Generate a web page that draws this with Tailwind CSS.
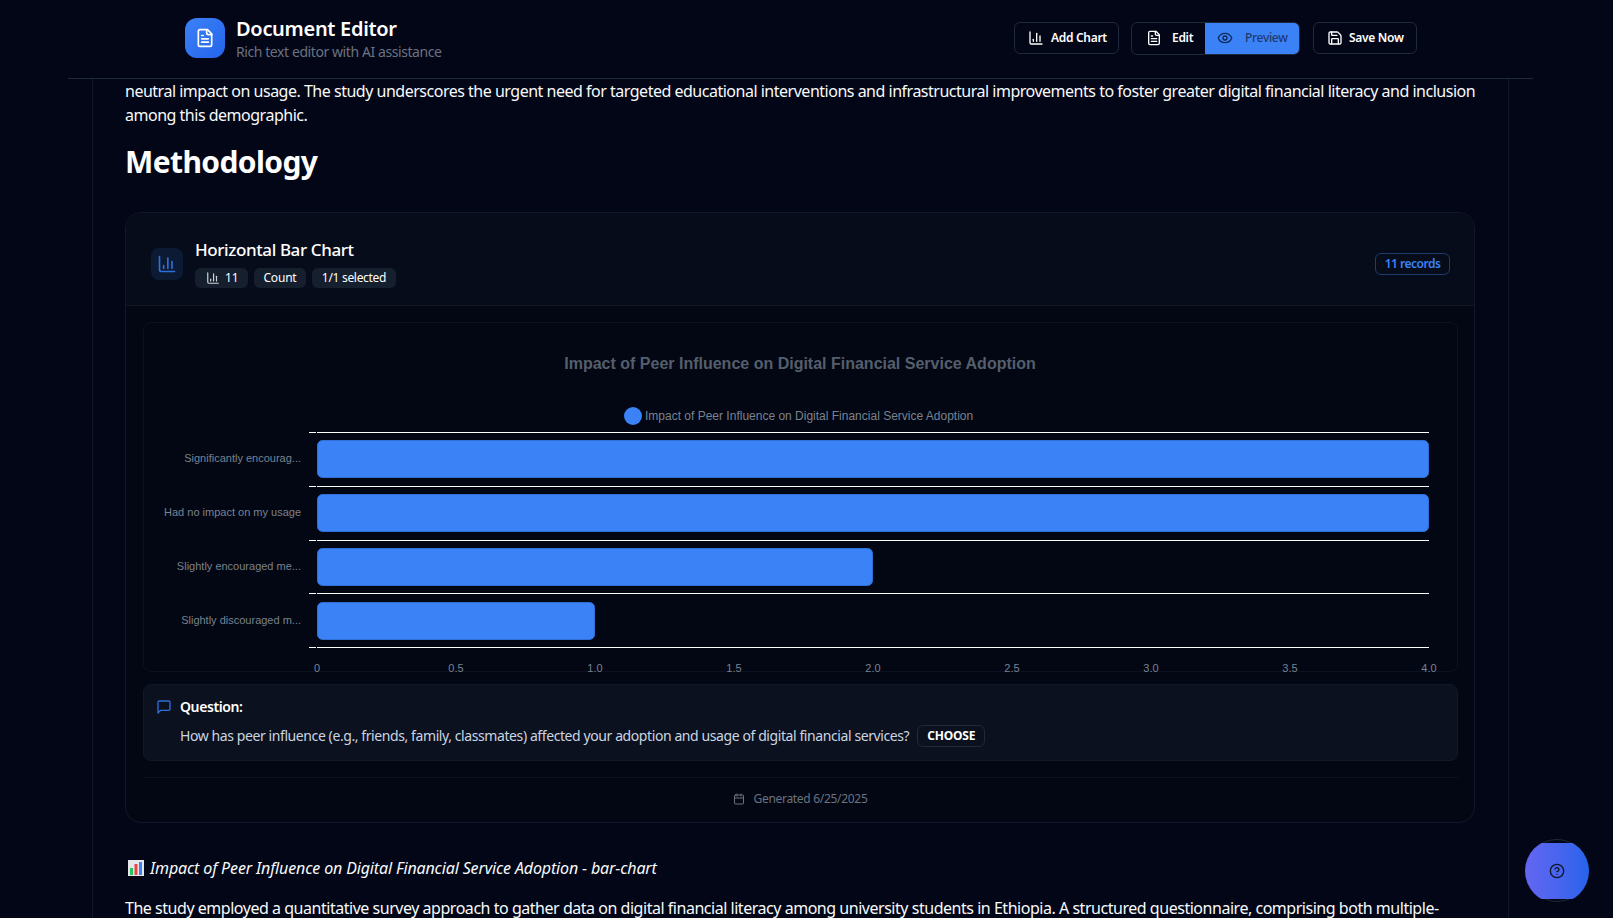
<!DOCTYPE html>
<html lang="en">
<head>
    <meta charset="UTF-8">
    <meta name="viewport" content="width=device-width, initial-scale=1.0">
    <title>Document Editor</title>
    <script src="https://cdn.jsdelivr.net/npm/@tailwindcss/browser@4"></script>
</head>
<body class="relative h-[918px] overflow-hidden bg-[#020617] text-white font-['Noto_Sans','Open_Sans',sans-serif]">

    <!-- top bar -->
    <header class="ml-[68px] flex h-[79px] w-[1465px] items-center justify-between border-b border-[#1e293b] pb-[2px] pl-[117px] pr-[116px]">
        <div class="flex items-center gap-[11px]">
            <div class="flex h-10 w-10 items-center justify-center rounded-xl bg-gradient-to-br from-[#3b82f6] to-[#2563eb]">
                <svg class="h-5 w-5" viewBox="0 0 24 24" fill="none" stroke="white" stroke-width="2" stroke-linecap="round" stroke-linejoin="round"><path d="M15 2H6a2 2 0 0 0-2 2v16a2 2 0 0 0 2 2h12a2 2 0 0 0 2-2V7Z"/><path d="M14 2v4a2 2 0 0 0 2 2h4"/><path d="M10 9H8"/><path d="M16 13H8"/><path d="M16 17H8"/></svg>
            </div>
            <div class="mt-[2px]">
                <h1 class="text-[20px] font-semibold leading-[24px] tracking-[-0.3px]">Document Editor</h1>
                <p class="mt-[1px] text-[14px] leading-[20px] tracking-[-0.42px] text-[#6b7280]">Rich text editor with AI assistance</p>
            </div>
        </div>
        <div class="flex items-center gap-3">
            <button class="flex h-8 w-[105px] items-center gap-[7px] rounded-md border border-[#1e293b] pl-[13px] text-[12px] font-semibold tracking-[-0.3px]">
                <svg class="h-4 w-4" viewBox="0 0 24 24" fill="none" stroke="white" stroke-width="2" stroke-linecap="round" stroke-linejoin="round"><path d="M3 3v16a2 2 0 0 0 2 2h16"/><path d="M8 17v-3"/><path d="M13 17V5"/><path d="M18 17V9"/></svg>
                Add Chart
            </button>
            <div class="flex h-[33px] w-[169px] overflow-hidden rounded-md border border-[#1e293b]">
                <button class="flex w-[73px] items-center gap-[10px] pl-[14px] text-[12px] font-semibold tracking-[-0.3px]">
                    <svg class="h-4 w-4" viewBox="0 0 24 24" fill="none" stroke="white" stroke-width="2" stroke-linecap="round" stroke-linejoin="round"><path d="M15 2H6a2 2 0 0 0-2 2v16a2 2 0 0 0 2 2h12a2 2 0 0 0 2-2V7Z"/><path d="M14 2v4a2 2 0 0 0 2 2h4"/><path d="M10 9H8"/><path d="M16 13H8"/><path d="M16 17H8"/></svg>
                    Edit
                </button>
                <button class="flex flex-1 items-center gap-[12px] bg-[#3b82f6] pl-3 text-[12px] font-medium tracking-[-0.3px] text-[#1e3a70]">
                    <svg class="h-4 w-4" viewBox="0 0 24 24" fill="none" stroke="#0f2a5c" stroke-width="2" stroke-linecap="round" stroke-linejoin="round"><path d="M2.06 12.35a1 1 0 0 1 0-.7 10.75 10.75 0 0 1 19.88 0 1 1 0 0 1 0 .7 10.75 10.75 0 0 1-19.88 0"/><circle cx="12" cy="12" r="3"/></svg>
                    Preview
                </button>
            </div>
            <button class="ml-[1px] flex h-8 w-[104px] items-center gap-[6px] rounded-md border border-[#1e293b] pl-[13px] text-[12px] font-semibold tracking-[-0.3px]">
                <svg class="h-4 w-4" viewBox="0 0 24 24" fill="none" stroke="white" stroke-width="2" stroke-linecap="round" stroke-linejoin="round"><path d="M15.2 3a2 2 0 0 1 1.4.6l3.8 3.8a2 2 0 0 1 .6 1.4V19a2 2 0 0 1-2 2H5a2 2 0 0 1-2-2V5a2 2 0 0 1 2-2z"/><path d="M17 21v-7a1 1 0 0 0-1-1H8a1 1 0 0 0-1 1v7"/><path d="M7 3v4a1 1 0 0 0 1 1h7"/></svg>
                Save Now
            </button>
        </div>
    </header>

    <!-- document -->
    <main class="ml-[92px] h-[839px] w-[1417px] border-x border-[#111827] px-[32px]">
        <p class="text-[16px] leading-[24px] tracking-[-0.49px] text-[#f8fafc]">neutral impact on usage. The study underscores the urgent need for targeted educational interventions and infrastructural improvements to foster greater digital financial literacy and inclusion among this demographic.</p>
        <h2 class="mt-[17px] text-[30px] font-bold leading-[36px] tracking-[-0.6px]">Methodology</h2>

        <section class="mt-[32px] h-[611px] w-[1350px] rounded-2xl border border-[#111827] bg-[#020713]">
            <div class="flex h-[93px] items-center justify-between rounded-t-2xl border-b border-[#111827] bg-[#070c1a] pl-[25px] pr-[24px] pt-[9px]">
                <div class="flex items-center gap-3">
                    <div class="flex h-8 w-8 items-center justify-center rounded-lg bg-[#0c1a33]">
                        <svg class="h-5 w-5" viewBox="0 0 24 24" fill="none" stroke="#2f6fd8" stroke-width="2" stroke-linecap="round" stroke-linejoin="round"><path d="M3 3v16a2 2 0 0 0 2 2h16"/><path d="M8 17v-3"/><path d="M13 17V5"/><path d="M18 17V9"/></svg>
                    </div>
                    <div>
                        <h3 class="text-[17px] font-medium leading-[22px] tracking-[-0.4px]">Horizontal Bar Chart</h3>
                        <div class="mt-[7px] flex gap-[6px] text-[12px] leading-[20px]">
                            <span class="flex h-5 w-[53px] items-center gap-[5px] rounded-md bg-[#161f2e] pl-[11px] tracking-[-0.2px]">
                                <svg class="h-[14px] w-[14px]" viewBox="0 0 24 24" fill="none" stroke="#d1d5db" stroke-width="2" stroke-linecap="round" stroke-linejoin="round"><path d="M3 3v16a2 2 0 0 0 2 2h16"/><path d="M8 17v-3"/><path d="M13 17V5"/><path d="M18 17V9"/></svg>
                                11
                            </span>
                            <span class="flex h-5 w-[52px] items-center justify-center rounded-md bg-[#161f2e] tracking-[-0.2px]">Count</span>
                            <span class="flex h-5 w-[84px] items-center justify-center rounded-md bg-[#161f2e] tracking-[-0.3px]">1/1 selected</span>
                        </div>
                    </div>
                </div>
                <span class="flex h-[22px] w-[75px] items-center justify-center rounded-md border border-[#1e3a6e] text-[12px] font-semibold tracking-[-0.5px] text-[#3b82f6]">11 records</span>
            </div>

            <div class="pl-[17px] pr-[16px] pt-[16px]">
                <div class="h-[350px] rounded-lg border border-[#0b1120]">
                    <!-- chart, origin is 144,323 on the page -->
                    <svg class="block overflow-visible font-['Liberation_Sans',Arial,sans-serif]" width="1313" height="348" viewBox="0 0 1313 348">
                        <text x="656" y="46" text-anchor="middle" font-size="16" font-weight="700" fill="#555e6c">Impact of Peer Influence on Digital Financial Service Adoption</text>
                        <circle cx="489" cy="93" r="9" fill="#3b82f6"/>
                        <text x="501" y="97" font-size="12" fill="#7a8290">Impact of Peer Influence on Digital Financial Service Adoption</text>
                        <g stroke="#ffffff" stroke-width="1">
                            <path d="M165 109.5h7M173 109.5h1112"/>
                            <path d="M165 163.5h7M173 163.5h1112"/>
                            <path d="M165 217.5h7M173 217.5h1112"/>
                            <path d="M165 270.5h7M173 270.5h1112"/>
                            <path d="M165 324.5h7M173 324.5h1112"/>
                        </g>
                        <g fill="#3b82f6" stroke="#2f6fd8">
                            <rect x="173.5" y="117.5" width="1111" height="37" rx="5"/>
                            <rect x="173.5" y="171.5" width="1111" height="37" rx="5"/>
                            <rect x="173.5" y="225.5" width="555" height="37" rx="5"/>
                            <rect x="173.5" y="279.5" width="277" height="37" rx="5"/>
                        </g>
                        <g font-size="11" fill="#7a8290" text-anchor="end">
                            <text x="157" y="139">Significantly encourag...</text>
                            <text x="157" y="193">Had no impact on my usage</text>
                            <text x="157" y="247">Slightly encouraged me...</text>
                            <text x="157" y="301">Slightly discouraged m...</text>
                        </g>
                        <g font-size="11" fill="#7a8290" text-anchor="middle">
                            <text x="173" y="349">0</text>
                            <text x="312" y="349">0.5</text>
                            <text x="451" y="349">1.0</text>
                            <text x="590" y="349">1.5</text>
                            <text x="729" y="349">2.0</text>
                            <text x="868" y="349">2.5</text>
                            <text x="1007" y="349">3.0</text>
                            <text x="1146" y="349">3.5</text>
                            <text x="1285" y="349">4.0</text>
                        </g>
                    </svg>
                </div>

                <div class="mt-[12px] h-[77px] rounded-lg border border-[#111827] bg-[#0b111e] pl-[12px] pt-[12px]">
                    <div class="flex items-center gap-[8px]">
                        <svg class="h-4 w-4" viewBox="0 0 24 24" fill="none" stroke="#2f6fd8" stroke-width="2" stroke-linecap="round" stroke-linejoin="round"><path d="M21 15a2 2 0 0 1-2 2H7l-4 4V5a2 2 0 0 1 2-2h14a2 2 0 0 1 2 2z"/></svg>
                        <span class="text-[14px] font-semibold leading-[20px] tracking-[-0.4px]">Question:</span>
                    </div>
                    <div class="mt-[8px] flex items-center gap-[8px] pl-[24px]">
                        <span class="text-[14px] leading-[22px] tracking-[-0.41px] text-[#cbd5e1]">How has peer influence (e.g., friends, family, classmates) affected your adoption and usage of digital financial services?</span>
                        <span class="flex h-[22px] w-[68px] items-center justify-center rounded-md border border-[#1e293b] text-[12px] font-bold tracking-[-0.2px]">CHOOSE</span>
                    </div>
                </div>

                <div class="mt-[16px] flex h-[43px] items-center justify-center gap-[8px] border-t border-[#0b1120] text-[12px] tracking-[-0.3px] text-[#6b7280]">
                    <svg class="h-3 w-3" viewBox="0 0 24 24" fill="none" stroke="#6b7280" stroke-width="2" stroke-linecap="round" stroke-linejoin="round"><path d="M8 2v4"/><path d="M16 2v4"/><rect x="3" y="4" width="18" height="18" rx="2"/><path d="M3 10h18"/></svg>
                    Generated 6/25/2025
                </div>
            </div>
        </section>

        <p class="mt-[33px] flex items-center gap-[5px] pl-[2px] text-[16px] italic leading-[24px] tracking-[-0.14px] text-[#f8fafc]">
            <svg class="h-[18px] w-[18px]" viewBox="0 0 18 18"><rect x="1" y="1" width="16" height="16" fill="#e5e7eb"/><rect x="3" y="9" width="3" height="7" fill="#22c55e"/><rect x="7.5" y="5" width="3" height="11" fill="#ef4444"/><rect x="12" y="3" width="3" height="13" fill="#3b82f6"/></svg>
            Impact of Peer Influence on Digital Financial Service Adoption - bar-chart
        </p>
        <p class="mt-[16px] whitespace-nowrap text-[16px] leading-[24px] tracking-[-0.47px] text-[#f8fafc]">The study employed a quantitative survey approach to gather data on digital financial literacy among university students in Ethiopia. A structured questionnaire, comprising both multiple-</p>
    </main>

    <!-- help button -->
    <div class="absolute left-[1525px] top-[839px] h-[63px] w-[64px]">
        <div class="absolute inset-x-[1px] inset-y-0 rounded-full border border-[#1f2937]"></div>
        <button class="absolute left-0 top-[4px] h-[56px] w-16 overflow-hidden">
            <span class="-mt-1 flex h-16 w-16 items-center justify-center rounded-full bg-gradient-to-r from-[#6366f1] to-[#2563eb]">
                <svg class="h-4 w-4" viewBox="0 0 24 24" fill="none" stroke="#0f172a" stroke-width="2" stroke-linecap="round" stroke-linejoin="round"><circle cx="12" cy="12" r="10"/><path d="M9.09 9a3 3 0 0 1 5.83 1c0 2-3 3-3 3"/><path d="M12 17h.01"/></svg>
            </span>
        </button>
    </div>
</body>
</html>
